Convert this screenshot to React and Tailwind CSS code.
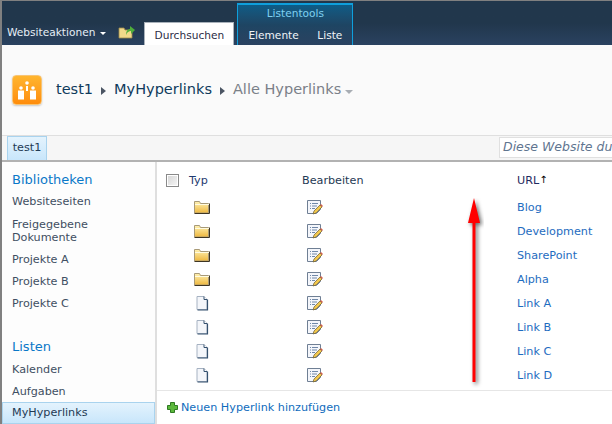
const font = { fontFamily: '"DejaVu Sans", Verdana, sans-serif' };

const rows = [
  { type: "folder", url: "Blog" },
  { type: "folder", url: "Development" },
  { type: "folder", url: "SharePoint" },
  { type: "folder", url: "Alpha" },
  { type: "doc", url: "Link A" },
  { type: "doc", url: "Link B" },
  { type: "doc", url: "Link C" },
  { type: "doc", url: "Link D" },
];

const FolderIcon = () => (
  <svg width="16" height="14" viewBox="0 0 16 14" className="block">
    <defs>
      <linearGradient id="fold" x1="0" y1="0" x2="0" y2="1">
        <stop offset="0" stopColor="#fff2b4" />
        <stop offset="1" stopColor="#eeb73e" />
      </linearGradient>
    </defs>
    <path d="M0.5 1.5h5l1 2h8v9.5h-14z" fill="url(#fold)" stroke="#a89a78" strokeWidth="1" />
    <path d="M15.5 3.5v10H0.5" fill="none" stroke="#3d3524" strokeWidth="1" />
    <path d="M1 4.5h14" stroke="#fffbe0" strokeWidth="1" />
  </svg>
);

const DocIcon = () => (
  <svg width="16" height="16" viewBox="0 0 16 16" className="block">
    <path d="M3 1.5h7l3 3v10H3z" fill="#f4f6fa" stroke="#a6b2c2" strokeWidth="1" />
    <path d="M13.5 4.5v10.5H3.5" fill="none" stroke="#34506e" strokeWidth="1.2" />
    <path d="M10 1.5v3h3" fill="#fff" stroke="#34506e" strokeWidth="1" />
  </svg>
);

const EditIcon = () => (
  <svg width="18" height="16" viewBox="0 0 18 16" className="block">
    <path d="M1.5 1.5h13v9l-4 4h-9z" fill="#f4f6fb" stroke="#6f7f94" strokeWidth="1" />
    <path d="M4 4.5h1M6 4.5h6M4 7h1M6 7h5M4 9.5h1M6 9.5h3" stroke="#7088a8" strokeWidth="1" />
    <path d="M7 15l1-3 6-6 2 2-6 6z" fill="#f2c84c" stroke="#6a5a30" strokeWidth="0.7" />
    <path d="M14 6l1-1 2 2-1 1z" fill="#d0604c" />
  </svg>
);

const LogoIcon = () => (
  <div className="flex h-[30px] w-[30px] items-end justify-center rounded-[4px] border border-[#f8c474] bg-gradient-to-b from-[#ffb52e] to-[#ff8c0a] pb-[4px] shadow-[0_1px_2px_rgba(0,0,0,0.2)]">
    <svg width="20" height="20" viewBox="0 0 20 20">
      <g fill="#fff">
        <circle cx="4" cy="8" r="1.8" />
        <rect x="1" y="10.5" width="6" height="9" />
        <circle cx="10" cy="3" r="1.8" />
        <rect x="9" y="6" width="2" height="5" />
        <circle cx="16" cy="8" r="1.8" />
        <rect x="13" y="10.5" width="6" height="9" />
      </g>
    </svg>
  </div>
);

const Caret = () => (
  <svg width="5" height="8" viewBox="0 0 5 8" className="mx-[8px] mt-[2px]">
    <path d="M0 0l5 4-5 4z" fill="#4b5563" />
  </svg>
);

const NavItem = ({ children, className = "" }) => (
  <div className={`flex h-[22px] items-center pl-[10px] pt-[2px] ${className}`}>{children}</div>
);

const App = () => {
  return (
    <div style={font} className="relative h-[424px] w-[612px] overflow-hidden border-t border-l-2 border-[#808080] bg-white text-[11.2px] text-[#3f4f62]">
      {/* ribbon */}
      <div className="flex h-[44px] items-end bg-gradient-to-b from-[#21374c] via-[#21374c] to-[#2a4260] text-[10.6px]">
        <div className="mb-[4px] ml-[5px] flex items-center text-[#e6eef6]">
          <span>Websiteaktionen</span>
          <span className="ml-[5px] mt-[1px] h-0 w-0 border-x-[3px] border-t-[3px] border-x-transparent border-t-white" />
        </div>
        <svg width="18" height="16" viewBox="0 0 18 16" className="mb-[5px] ml-[12px]">
          <path d="M1 4h5l1 2h7v8H1z" fill="#f1d98a" stroke="#a08a4a" strokeWidth="0.8" />
          <path d="M8 11c0-4 2-6 4-6V2l5 4-4 4V7c-2 0-4 1-5 4z" fill="#4fae3a" />
        </svg>
        <div className="ml-[8px] flex h-[23px] w-[90px] items-center justify-center border-x border-t border-[#a9b2bb] bg-white pt-[4px] text-[#2b2b45]">
          Durchsuchen
        </div>
        <div className="ml-[3px] flex h-[42px] w-[116px] flex-col justify-between border-x border-t-2 border-[#0f9fdc] bg-gradient-to-b from-[#0d5c86] via-[#1e4563] to-[#2a4260]">
          <div className="pt-[1px] text-center text-[#7fd0f0]">Listentools</div>
          <div className="flex justify-between px-[10px] pb-[1px] text-[#f0f4f8]">
            <span>Elemente</span>
            <span>Liste</span>
          </div>
        </div>
      </div>

      {/* title area */}
      <div className="flex h-[91px] items-center border-b border-[#dfdfdf] bg-[#fafafa] pl-[10px]">
        <LogoIcon />
        <div className="ml-[14px] flex items-center text-[14.5px] text-[#0f3a5c]">
          <span>test1</span>
          <Caret />
          <span>MyHyperlinks</span>
          <Caret />
          <span className="text-[#7a8088]">Alle Hyperlinks</span>
          <span className="ml-[4px] mt-[3px] h-0 w-0 border-x-[4px] border-t-[4px] border-x-transparent border-t-[#a8adb3]" />
        </div>
      </div>

      {/* top nav */}
      <div className="flex h-[26px] items-stretch justify-between border-b-2 border-[#b2b2b2] bg-[#f6f6f6]">
        <div className="ml-[5px] flex w-[40px] items-center justify-center border border-b-0 border-[#a9d3ee] bg-gradient-to-b from-[#e4f3fd] to-[#c8e6fb] text-[#1f3a54]">
          test1
        </div>
        <div className="mb-[2px] mt-[1px] flex w-[113px] items-center overflow-hidden whitespace-nowrap border border-r-0 border-[#e0e0e0] bg-white pl-[3px] text-[12.5px] italic text-[#5f7590]">
          Diese Website durchsuchen
        </div>
      </div>

      <div className="flex">
        {/* sidebar */}
        <div className="flex h-[262px] w-[155px] flex-col border-r-2 border-[#dfdfdf] bg-[#fdfdfd]">
          <NavItem className="mt-[6px] text-[13px] text-[#0a78c8]">Bibliotheken</NavItem>
          <NavItem>Websiteseiten</NavItem>
          <div className="flex h-[36px] items-center pl-[10px] pt-[2px] leading-[13px]">
            <div>Freigegebene<br />Dokumente</div>
          </div>
          <NavItem>Projekte A</NavItem>
          <NavItem>Projekte B</NavItem>
          <NavItem>Projekte C</NavItem>
          <NavItem className="mt-[21px] text-[13px] text-[#0a78c8]">Listen</NavItem>
          <NavItem className="mt-[1px]">Kalender</NavItem>
          <NavItem>Aufgaben</NavItem>
          <div className="flex h-[22px] items-center border border-[#a9d3ee] bg-gradient-to-b from-[#e4f3fd] to-[#c8e6fb] pl-[9px] pt-[1px] text-[#1f3a54]">
            MyHyperlinks
          </div>
        </div>

        {/* list */}
        <div className="flex-1">
          <div className="flex h-[33px] items-center pt-[3px]">
            <span className="ml-[9px] h-[13px] w-[13px] border border-[#8a8a8a] bg-gradient-to-br from-[#d4d4d4] to-[#f8f8f8] shadow-[inset_0_0_0_1px_#fff]" />
            <span className="ml-[10px] mt-[2px] w-[113px] text-[#1f3a70]">Typ</span>
            <span className="mt-[2px] w-[215px] text-[#1f3a54]">Bearbeiten</span>
            <span className="mt-[2px] text-[#1f2a60]">URL</span>
            <span className="text-[10px] leading-none text-black">↑</span>
          </div>
          {rows.map((row) => (
            <div key={row.url} className="flex h-[24px] items-center">
              <div className="ml-[37px] w-[112px]">
                {row.type === "folder" ? <FolderIcon /> : <DocIcon />}
              </div>
              <div className="w-[211px]">
                <EditIcon />
              </div>
              <span className="mt-[2px] text-[#1e6cc0]">{row.url}</span>
            </div>
          ))}
          <div className="mt-[3px] flex h-[33px] items-center border-t border-[#e6e6e6] pl-[10px] text-[#0f6cbd]">
            <svg width="11" height="11" viewBox="0 0 11 11" className="mr-[3px]">
              <path d="M3.5 0.5h4v3h3v4h-3v3h-4v-3h-3v-4h3z" fill="#5cb83c" stroke="#2f7a22" strokeWidth="1" />
            </svg>
            <span className="mt-[2px]">Neuen Hyperlink hinzufügen</span>
          </div>
        </div>
      </div>

      {/* annotation arrow */}
      <svg width="20" height="190" viewBox="0 0 20 190" className="absolute left-[462px] top-[197px]">
        <path d="M10 0l6 25h-4.5v159h-3V25H4z" fill="#ff0000" style={{ filter: "drop-shadow(2px 2px 2px rgba(0,0,0,0.6))" }} />
      </svg>
    </div>
  );
};

export default App;
